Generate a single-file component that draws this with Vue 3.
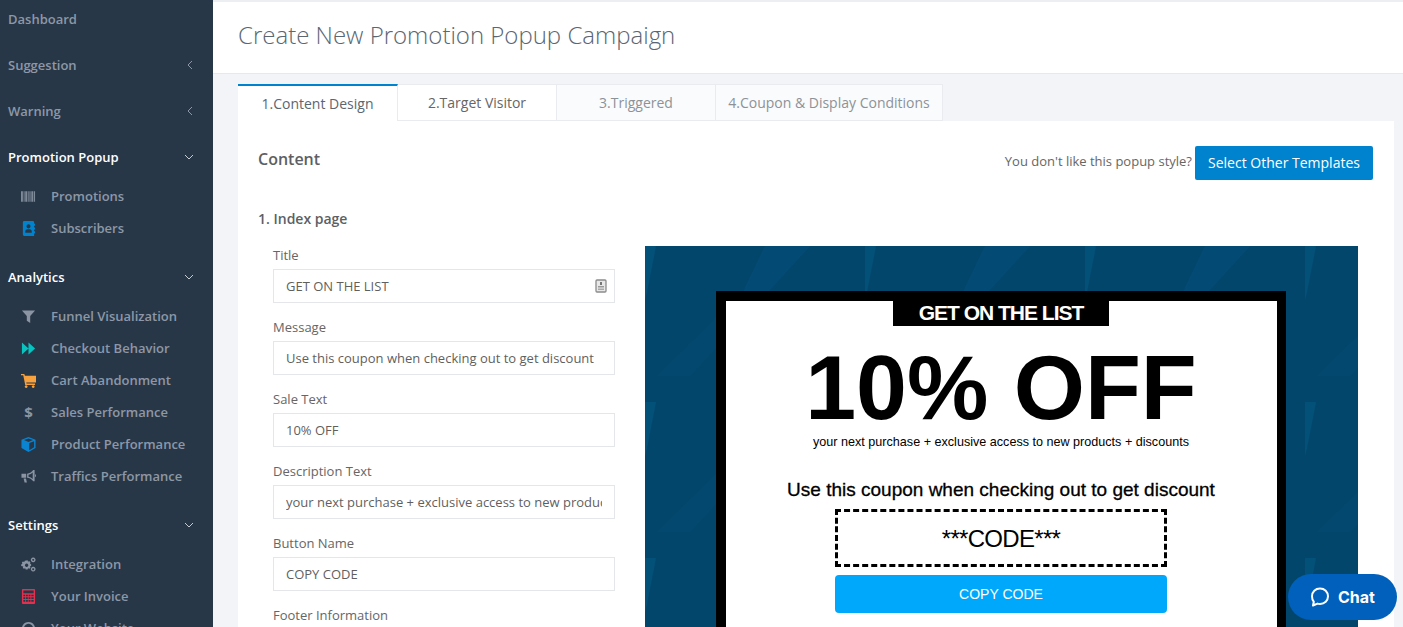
<script setup>
const menu = [
  { label: 'Dashboard' },
  { label: 'Suggestion', arrow: 'left' },
  { label: 'Warning', arrow: 'left' },
  {
    label: 'Promotion Popup',
    arrow: 'down',
    open: true,
    children: [
      { label: 'Promotions', icon: 'barcode', color: '#7f8a99' },
      { label: 'Subscribers', icon: 'contact', color: '#0083ce' }
    ]
  },
  {
    label: 'Analytics',
    arrow: 'down',
    open: true,
    children: [
      { label: 'Funnel Visualization', icon: 'funnel', color: '#8a94a3' },
      { label: 'Checkout Behavior', icon: 'forward', color: '#06c5c0' },
      { label: 'Cart Abandonment', icon: 'cart', color: '#f7a23e' },
      { label: 'Sales Performance', icon: 'dollar', color: '#8a94a3' },
      { label: 'Product Performance', icon: 'cube', color: '#0a84d0' },
      { label: 'Traffics Performance', icon: 'bullhorn', color: '#8a94a3' }
    ]
  },
  {
    label: 'Settings',
    arrow: 'down',
    open: true,
    children: [
      { label: 'Integration', icon: 'cogs', color: '#8a94a3' },
      { label: 'Your Invoice', icon: 'calc', color: '#e2304f' },
      { label: 'Your Website', icon: 'globe', color: '#8a94a3' }
    ]
  }
]

const iconPaths = {
  barcode: 'M0 2.500h2v11H0zM2.800 2.500h1v11h-1zM4.500 2.500h2v11h-2zM7.200 2.500h1v11h-1zM9 2.500h1.200v11H9zM11 2.500h2v11h-2zM13.700 2.500h1.300v11h-1.300z',
  contact: 'M2 1.500A1.500 1.500 0 0 1 3.500 0h9A1.500 1.500 0 0 1 14 1.500V16H3.500A1.500 1.500 0 0 1 2 14.500zM8 3.500a2.200 2.200 0 1 0 0 4.400 2.200 2.200 0 0 0 0-4.400zM4.500 12.500h7V11c0-1.500-1.200-2.300-2.200-2.300H6.700c-1 0-2.200.8-2.200 2.300zM14 3h1v2h-1zM14 7h1v2h-1zM14 11h1v2h-1z',
  funnel: 'M1 1.500h14L9.800 7.500v7.500l-3.600-2.500v-5z',
  forward: 'M1 1.500l7 6.500-7 6.500zM8 1.500l7 6.500-7 6.500z',
  cart: 'M0 1h3.500l.7 2H16v7H5.600l.3 1.300H15v1.400H4.500L2.400 2.500H0zM5.500 13a1.500 1.500 0 1 0 .01 0zM13 13a1.500 1.500 0 1 0 .01 0z',
  cube: 'M8 0l7.500 2.800v9L8 16 .5 11.800v-9zM8 1.500L3.200 3.300 8 5.200l4.800-1.900zM8.800 6.500v7.500l5.200-3V4.500z',
  bullhorn: 'M13 1h1.500v12H13l-.4-.6C11 10.500 8.800 9.500 6.500 9.300V5C8.800 4.700 11 3.700 12.600 1.700zM12.500 3.800C11.200 5 9.700 5.800 8 6.200v2c1.700.4 3.200 1.200 4.500 2.400zM.5 5h5v4.300h-5zM2.800 10h2.500l1 4.500H3.800zM15 5.500a1.700 1.700 0 0 1 0 3.200z',
  cogs: 'M7 3.500l.5 1.300 1.500-.4 1.100 1.100-.5 1.400 1.200.7v1.700l-1.200.7.500 1.400-1.100 1.100-1.500-.4-.5 1.300H5l-.5-1.300-1.500.4-1.100-1.100.5-1.400L.2 9.700V8l1.200-.7-.5-1.400L2 4.800l1.500.4.500-1.300zM6 7a1.800 1.800 0 1 0 .01 0zM13 .5a2.500 2.500 0 1 1-.01 0zM13 2a1 1 0 1 0 .01 0zM13 10.500a2.500 2.500 0 1 1-.01 0zM13 12a1 1 0 1 0 .01 0z',
  calc: 'M2 0h12a1 1 0 0 1 1 1v14a1 1 0 0 1-1 1H2a1 1 0 0 1-1-1V1a1 1 0 0 1 1-1zM2.500 1.500v3h11v-3zM2.500 6v1.800h2V6zM5.300 6v1.800h2V6zM8.100 6v1.800h2V6zM11 6v1.800h2.500V6zM2.500 8.800v1.800h2V8.800zM5.300 8.800v1.800h2V8.800zM8.100 8.800v1.800h2V8.800zM11 8.800v1.800h2.500V8.800zM2.500 11.600v2h2v-2zM5.300 11.600v2h2v-2zM8.100 11.600v2h2v-2zM11 11.600v2h2.500v-2z',
  globe: 'M8 1a7 7 0 1 1-.01 0zM8 3a5 5 0 1 0 .01 0z'
}

const tabs = [
  { label: '1.Content Design', cls: 'active' },
  { label: '2.Target Visitor', cls: '' },
  { label: '3.Triggered', cls: 'muted' },
  { label: '4.Coupon & Display Conditions', cls: 'muted wide' }
]

const fields = [
  { label: 'Title', value: 'GET ON THE LIST', badge: true },
  { label: 'Message', value: 'Use this coupon when checking out to get discount' },
  { label: 'Sale Text', value: '10% OFF' },
  { label: 'Description Text', value: 'your next purchase + exclusive access to new products + discounts' },
  { label: 'Button Name', value: 'COPY CODE' },
  { label: 'Footer Information', value: '' }
]
</script>

<template>
  <div class="page">
    <aside class="sidebar">
      <div v-for="item in menu" :key="item.label" class="group" :class="{ open: item.open }">
        <div class="top-item">
          <span>{{ item.label }}</span>
          <svg v-if="item.arrow === 'left'" class="chev-left" viewBox="0 0 6 10" width="6" height="10">
            <path d="M5 1L1 5l4 4" fill="none" stroke="currentColor" stroke-width="1" />
          </svg>
          <svg v-if="item.arrow === 'down'" class="chev-down" viewBox="0 0 10 6" width="10" height="6">
            <path d="M1 1l4 4 4-4" fill="none" stroke="currentColor" stroke-width="1" />
          </svg>
        </div>
        <div v-if="item.children" class="submenu">
          <div v-for="sub in item.children" :key="sub.label" class="sub-item">
            <span class="icon-box">
              <span v-if="sub.icon === 'dollar'" class="dollar">$</span>
              <svg v-else viewBox="0 0 16 16" width="15" height="15">
                <path :d="iconPaths[sub.icon]" :fill="sub.color" fill-rule="evenodd" />
              </svg>
            </span>
            <span>{{ sub.label }}</span>
          </div>
        </div>
      </div>
    </aside>

    <main class="main">
      <header class="header">
        <h1>Create New Promotion Popup Campaign</h1>
      </header>

      <div class="body">
        <nav class="tabs">
          <div v-for="tab in tabs" :key="tab.label" class="tab" :class="tab.cls">{{ tab.label }}</div>
        </nav>

        <section class="panel">
          <div class="panel-head">
            <h2>Content</h2>
            <div class="template-switch">
              <span class="switch-text">You don't like this popup style?</span>
              <button class="btn-templates">Select Other Templates</button>
            </div>
          </div>

          <h3>1. Index page</h3>

          <div class="columns">
            <form class="form">
              <div v-for="field in fields" :key="field.label" class="field">
                <label>{{ field.label }}</label>
                <div class="input-wrap">
                  <input type="text" :value="field.value" readonly />
                  <svg v-if="field.badge" class="badge" viewBox="0 0 12 14" width="12" height="14">
                    <rect x="1" y="1" width="10" height="12" rx="1" fill="#e8e8e8" stroke="#8c8c8c" stroke-width="1.300" />
                    <rect x="5" y="3" width="2" height="3" fill="#777" />
                    <rect x="3" y="7" width="6" height="1.500" fill="#999" />
                    <rect x="3" y="9.500" width="6" height="1.500" fill="#aaa" />
                  </svg>
                </div>
              </div>
            </form>

            <div class="preview">
              <svg class="preview-bg" width="713" height="420">
                <defs>
                  <pattern id="facets" width="220" height="156" patternUnits="userSpaceOnUse">
                    <rect width="220" height="156" fill="#03466b" />
                    <polygon points="98,46 123,46 45,130 12,130" fill="#03486e" />
                    <polygon points="120,0 165,0 123,46 98,46" fill="#034a75" />
                    <polygon points="0,0 11,0 2,46 0,54" fill="#035078" />
                  </pattern>
                </defs>
                <rect width="713" height="420" fill="url(#facets)" />
              </svg>
              <div class="popup">
                <div class="popup-title">GET ON THE LIST</div>
                <div class="sale">10% OFF</div>
                <p class="desc">your next purchase + exclusive access to new products + discounts</p>
                <p class="message">Use this coupon when checking out to get discount</p>
                <div class="code">***CODE***</div>
                <div class="copy">COPY CODE</div>
              </div>
            </div>
          </div>
        </section>
      </div>
    </main>

    <div class="chat">
      <svg viewBox="0 0 20 20" width="20" height="20">
        <path d="M10 1.500c4.600 0 8 3.300 8 7.800 0 4.400-3.400 7.700-8 7.700-.9 0-1.700-.1-2.500-.4L3 18.500l.8-3.700C2.500 13.400 2 11.500 2 9.300 2 4.800 5.400 1.500 10 1.500z" fill="none" stroke="#fff" stroke-width="2" stroke-linejoin="round" />
      </svg>
      <span>Chat</span>
    </div>
  </div>
</template>

<style scoped>
.page {
  display: flex;
  width: 1403px;
  height: 627px;
  overflow: hidden;
  font-family: "Open Sans", "Liberation Sans", sans-serif;
  background: #f3f4f8;
  position: relative;
}

.sidebar {
  width: 213px;
  flex-shrink: 0;
  background: #283747;
  color: #8d97a7;
  font-size: 13px;
  font-weight: 600;
  margin-top: -4px;
  height: 640px;
}

.top-item {
  height: 46px;
  display: flex;
  align-items: center;
  justify-content: space-between;
  padding: 0 19px 0 8px;
}

.group.open > .top-item {
  color: #fff;
}

.chev-left {
  color: #8d97a7;
  margin-right: 1px;
}

.chev-down {
  color: #c5cbd3;
}

.submenu {
  padding-bottom: 10px;
}

.sub-item {
  height: 32px;
  display: flex;
  align-items: center;
  padding-left: 21px;
}

.icon-box {
  width: 15px;
  height: 15px;
  margin-right: 15px;
  display: flex;
  align-items: center;
  justify-content: center;
}

.dollar {
  font-size: 15px;
  font-weight: 700;
  color: #8a94a3;
}

.main {
  flex: 1;
  min-width: 0;
}

.header {
  background: #fff;
  border-top: 2px solid #eceef1;
  border-bottom: 1px solid #e6e8ec;
  padding: 0 0 6px 25px;
  box-sizing: content-box;
  height: 65px;
  display: flex;
  align-items: center;
}

.header h1 {
  margin: 0;
  font-size: 24px;
  font-weight: 300;
  color: #5a6672;
}

.body {
  padding: 10px 9px 0 25px;
}

.tabs {
  display: flex;
  height: 37px;
}

.tab {
  width: 159px;
  box-sizing: border-box;
  display: flex;
  align-items: center;
  justify-content: center;
  font-size: 14px;
  color: #666;
  background: #fff;
  border-top: 1px solid #e9ebef;
  border-right: 1px solid #e9ebef;
  border-bottom: 1px solid #e9ebef;
}

.tab.active {
  width: 160px;
  border-top: 2px solid #0083ce;
  border-bottom: 0;
  color: #5c6670;
}

.tab.muted {
  background: #fafbfc;
  color: #8d9298;
}

.tab.wide {
  width: 227px;
}

.panel {
  background: #fff;
  padding: 0 21px 0 20px;
  height: 520px;
}

.panel-head {
  display: flex;
  justify-content: space-between;
  align-items: flex-start;
  padding-top: 25px;
}

.panel-head h2 {
  margin: 0;
  font-size: 16px;
  line-height: 26px;
  font-weight: 600;
  color: #5c5f66;
}

.template-switch {
  display: flex;
  align-items: center;
  gap: 3px;
  font-size: 13px;
  color: #666;
}

.switch-text {
  padding-bottom: 4px;
}

.btn-templates {
  width: 178px;
  height: 34px;
  border: 0;
  border-radius: 2px;
  background: #0083ce;
  color: #fff;
  font-family: inherit;
  font-size: 14px;
  font-weight: 500;
  padding: 0 0 2px;
}

h3 {
  margin: 0;
  padding-top: 29px;
  font-size: 14px;
  line-height: 20px;
  font-weight: 600;
  color: #5c5f66;
}

.columns {
  display: flex;
  gap: 30px;
  padding-left: 15px;
  padding-top: 17px;
}

.form {
  width: 342px;
  flex-shrink: 0;
}

.field {
  height: 72px;
}

.field label {
  display: block;
  font-size: 13px;
  line-height: 18px;
  color: #666;
  margin-bottom: 5px;
}

.input-wrap {
  position: relative;
}

.input-wrap input {
  width: 100%;
  height: 34px;
  box-sizing: border-box;
  border: 1px solid #e4e6ea;
  padding: 0 12px;
  font-family: inherit;
  font-size: 13px;
  color: #5f5f5f;
  outline: none;
}

.badge {
  position: absolute;
  right: 8px;
  top: 10px;
}

.preview {
  position: relative;
  width: 713px;
  height: 420px;
  flex-shrink: 0;
  padding-top: 45px;
  box-sizing: border-box;
}

.preview-bg {
  position: absolute;
  left: 0;
  top: 0;
}

.popup {
  position: relative;
  width: 570px;
  height: 400px;
  box-sizing: border-box;
  margin-left: 71px;
  border: 10px solid #000;
  border-right-width: 9px;
  padding-right: 1px;
  background: #fff;
  font-family: "Liberation Sans", Arial, sans-serif;
  color: #000;
  text-align: center;
}

.popup-title {
  width: 216px;
  height: 25px;
  margin: 0 auto;
  background: #000;
  color: #fff;
  font-size: 21px;
  font-weight: 700;
  line-height: 23px;
  letter-spacing: -1px;
}

.sale {
  margin-top: 16px;
  font-size: 91.5px;
  line-height: 91px;
  font-weight: 700;
}

.desc {
  margin: 2px 0 0;
  font-size: 12.6px;
  line-height: 14px;
}

.message {
  margin: 30px 0 0;
  font-size: 19px;
  line-height: 22px;
  -webkit-text-stroke: 0.3px #000;
}

.code {
  width: 332px;
  height: 58px;
  box-sizing: border-box;
  margin: 8px auto 0;
  border: 3px dashed #000;
  font-size: 24px;
  line-height: 53px;
  letter-spacing: -0.7px;
}

.copy {
  width: 332px;
  height: 38px;
  margin: 8px auto 0;
  background: #00a8fb;
  border-radius: 4px;
  color: #fff;
  font-size: 14px;
  line-height: 38px;
}

.chat {
  position: absolute;
  left: 1288px;
  top: 574px;
  width: 109px;
  height: 46px;
  border-radius: 23px;
  background: #0060bb;
  color: #fff;
  display: flex;
  align-items: center;
  justify-content: center;
  gap: 8px;
  font-family: Inter, "Liberation Sans", sans-serif;
  font-size: 16px;
  font-weight: 700;
}
</style>

<style>
html,
body {
  margin: 0;
  background: #f3f4f8;
}
</style>
